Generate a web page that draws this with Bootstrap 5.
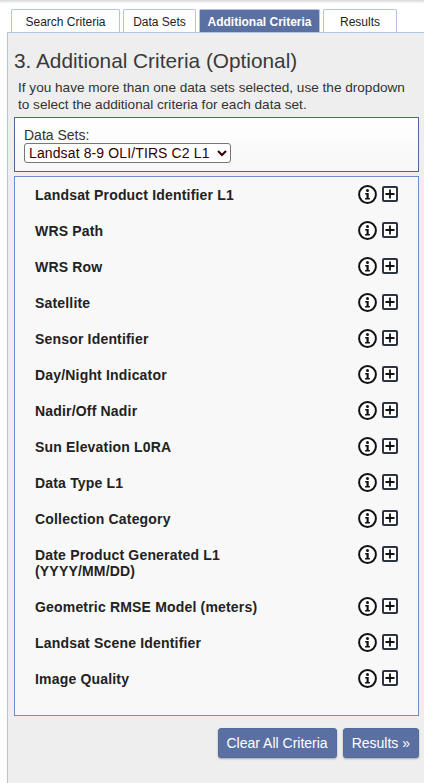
<!DOCTYPE html>
<html>
<head>
    <meta charset="UTF-8">
    <title>Additional Criteria</title>
    <link href="https://cdn.jsdelivr.net/npm/bootstrap@5.3.0/dist/css/bootstrap.min.css" rel="stylesheet">
    <style>
        html, body { height: 783px; overflow: hidden; }
        body {
            background: #fff;
            font-family: "Liberation Sans", Arial, sans-serif;
            font-size: 14px;
            color: #333;
            padding-left: 7px;
            box-shadow: inset 0 3px 2px -1px #ddd;
        }
        .tab-strip { gap: 3px; padding: 9px 0 0 4px; height: 32px; }
        .tab-item {
            height: 23px;
            padding-top: 3px;
            text-align: center;
            font-size: 12px;
            color: #222;
            text-decoration: none;
            background: #fff;
            border: 1px solid #b3c3e6;
            border-bottom: 0;
            border-radius: 2px 2px 0 0;
        }
        .tab-item.on { background: #5a70a3; color: #fff; font-weight: 700; }
        .main-panel {
            height: 751px;
            background: #eee;
            border-top: 1px solid #b3c3e6;
            border-left: 1px solid #b3c3e6;
            padding: 0 5px 0 6px;
        }
        .page-title { font-size: 20.8px; line-height: 28px; margin: 14px 0 0; color: #3a3a3a; font-weight: 400; }
        .page-note { font-size: 13.6px; line-height: 17px; margin: 4px 0 0 4px; color: #333; }
        .set-box {
            height: 55px;
            margin-top: 4px;
            padding: 9px 9px 0;
            background: linear-gradient(#fff, #f7f7f7);
            border: 1px solid #4a6795;
            line-height: 16px;
        }
        .set-box select {
            display: block;
            width: 207px;
            height: 20px;
            padding: 0;
            font-family: inherit;
            font-size: 14px;
            color: #300;
            background: #fff;
            border: 1px solid #777;
            border-radius: 3px;
            letter-spacing: .12px;
        }
        .criteria-box {
            height: 540px;
            margin-top: 4px;
            padding: 1px 20px 0 20px;
            background: #f8f8f8;
            border: 1px solid #6d8dcf;
        }
        .crit-row { padding: 9px 0 11px; }
        .crit-name {
            width: 230px;
            font-weight: 700;
            line-height: 16px;
            letter-spacing: .18px;
            color: #222;
        }
        .crit-icons { gap: 5px; height: 16px; margin-top: -2px; }
        .plus-icon { margin-top: 1px; }
        .btn-line { gap: 6px; margin-top: 12px; }
        .act-btn {
            height: 30px;
            padding: 0 8px;
            font-size: 14px;
            color: #fff;
            background: #5a70a3;
            border: 1px solid #556b9c;
            border-radius: 3px;
            box-shadow: 0 1px 2px rgba(0,0,0,.3);
        }
    </style>
</head>
<body>
    <div class="tab-strip d-flex">
        <a class="tab-item" style="width: 109px" href="#">Search Criteria</a>
        <a class="tab-item" style="width: 73px" href="#">Data Sets</a>
        <a class="tab-item on" style="width: 121px" href="#">Additional Criteria</a>
        <a class="tab-item" style="width: 74px" href="#">Results</a>
    </div>
    <div class="main-panel">
        <h1 class="page-title">3. Additional Criteria (Optional)</h1>
        <p class="page-note">If you have more than one data sets selected, use the dropdown to select the additional criteria for each data set.</p>
        <div class="set-box">
            <label for="setSelect">Data Sets:</label>
            <select id="setSelect"><option>Landsat 8-9 OLI/TIRS C2 L1</option></select>
        </div>
        <div class="criteria-box" id="criteria"></div>
        <div class="btn-line d-flex justify-content-end">
            <button class="act-btn" type="button">Clear All Criteria</button>
            <button class="act-btn" type="button">Results »</button>
        </div>
    </div>

    <script>
        const names = ['Landsat Product Identifier L1', 'WRS Path', 'WRS Row', 'Satellite', 'Sensor Identifier',
            'Day/Night Indicator', 'Nadir/Off Nadir', 'Sun Elevation L0RA', 'Data Type L1', 'Collection Category',
            'Date Product Generated L1 (YYYY/MM/DD)', 'Geometric RMSE Model (meters)', 'Landsat Scene Identifier', 'Image Quality'];
        const icons = `<div class="crit-icons d-flex align-items-start">
            <svg width="19" height="19" viewBox="0 0 19 19"><circle cx="9.5" cy="9.5" r="8.4" fill="#fff" stroke="#111" stroke-width="2"/><circle cx="9.5" cy="5.4" r="1.5" fill="#111"/><path d="M7.2 8h3.5v5h1.2v1.6H7.1V13h1.4V9.5H7.2z" fill="#111"/></svg>
            <svg class="plus-icon" width="16" height="16" viewBox="0 0 16 16"><rect x="1" y="1" width="14" height="14" rx="1" fill="#fff" stroke="#2b3440" stroke-width="2"/><path d="M8 3.5v9M3.5 8h9" stroke="#111" stroke-width="1.8"/></svg>
        </div>`;
        document.getElementById('criteria').innerHTML = names.map(n =>
            `<div class="crit-row d-flex justify-content-between align-items-start"><div class="crit-name">${n}</div>${icons}</div>`
        ).join('');
    </script>
    <script src="https://cdn.jsdelivr.net/npm/bootstrap@5.3.0/dist/js/bootstrap.bundle.min.js"></script>
</body>
</html>
